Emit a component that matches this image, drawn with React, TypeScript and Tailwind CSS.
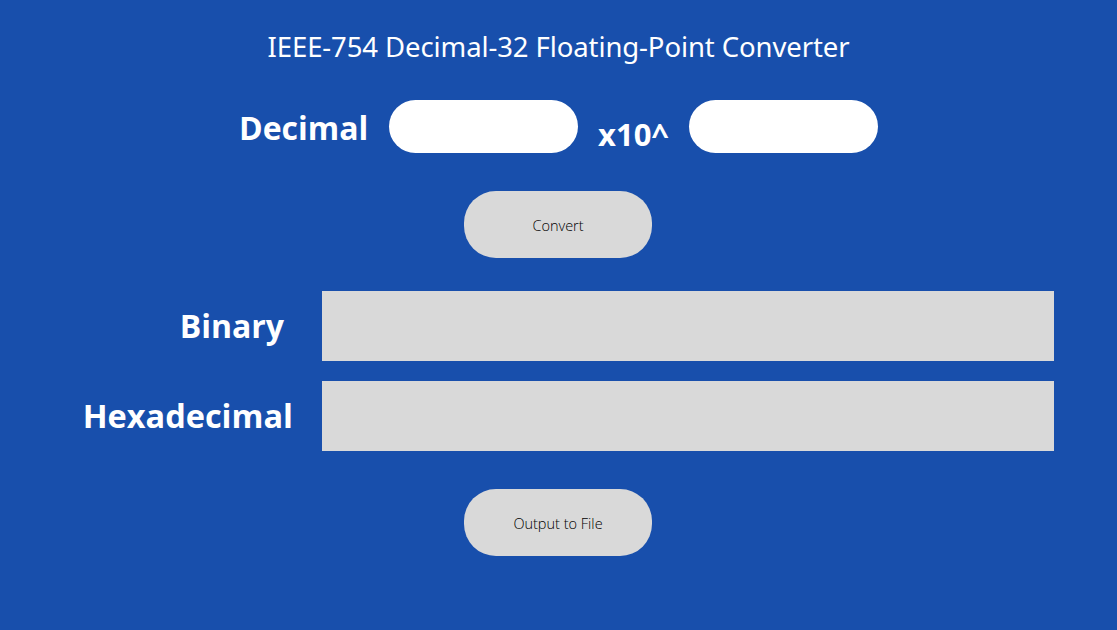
import React from 'react';

const labelFont = "font-['Open_Sans',sans-serif]";

const App = () => {
  return (
    <div className="w-[1117px] h-[630px] bg-[#184fac] text-white overflow-hidden">
      <h1 className="pt-[29px] h-[100px] text-center text-[27.5px] leading-[36px] font-normal font-['Noto_Sans',sans-serif] tracking-[-0.1px]">
        IEEE-754 Decimal-32 Floating-Point Converter
      </h1>

      <div className="flex items-start h-[91px]">
        <span className={`${labelFont} ml-[239px] w-[150px] mt-[8px] text-[32px] leading-[40px] font-bold`}>
          Decimal
        </span>
        <input className="w-[189px] h-[53px] rounded-full bg-white outline-none" />
        <span className={`${labelFont} ml-[20px] w-[91px] mt-[14px] text-[31px] leading-[40px] font-bold`}>
          x10^
        </span>
        <input className="w-[189px] h-[53px] rounded-full bg-white outline-none" />
      </div>

      <div className="h-[100px]">
        <button className="ml-[464px] w-[188px] h-[67px] rounded-[32px] bg-[#d9d9d9] text-black text-[14.5px] pt-[2px] font-light font-['Open_Sans',sans-serif]">
          Convert
        </button>
      </div>

      <div className="flex items-center h-[70px]">
        <span className={`${labelFont} w-[284px] text-right text-[32px] font-bold`}>Binary</span>
        <div className="ml-[38px] w-[732px] h-[70px] bg-[#d9d9d9]" />
      </div>

      <div className="flex items-center h-[70px] mt-[20px]">
        <span className={`${labelFont} w-[293px] text-right text-[32.5px] font-bold`}>Hexadecimal</span>
        <div className="ml-[29px] w-[732px] h-[70px] bg-[#d9d9d9]" />
      </div>

      <div className="mt-[38px]">
        <button className="ml-[464px] w-[188px] h-[67px] rounded-[32px] bg-[#d9d9d9] text-black text-[14.5px] pt-[2px] font-light font-['Open_Sans',sans-serif]">
          Output to File
        </button>
      </div>
    </div>
  );
};

export default App;
